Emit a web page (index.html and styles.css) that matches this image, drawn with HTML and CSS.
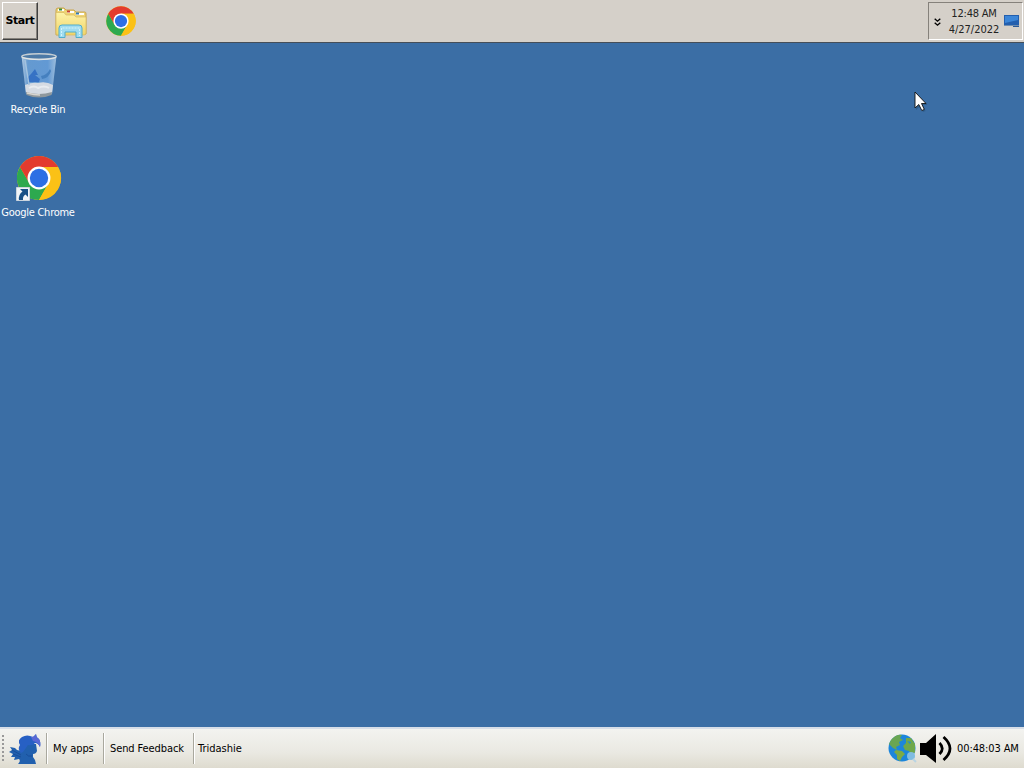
FILE: index.html
```
<!DOCTYPE html>
<html lang="en">

<head>
    <meta charset="UTF-8">
    <meta name="viewport" content="width=device-width, initial-scale=1.0">
    <title>Desktop</title>
    <link rel="stylesheet" href="styles.css">
</head>

<body>
    <svg width="0" height="0" class="defs">
        <symbol id="chrome" viewBox="0 0 48 48">
            <circle cx="24" cy="24" r="23.5" fill="#fbc116" />
            <path d="M3.7 12.2 L14 29.8 L24 35 L34 29.8 L24 47.5 A23.5 23.5 0 0 1 3.7 12.2 Z" fill="#2da94f" />
            <path d="M24 12.2 H44.3 A23.5 23.5 0 0 0 3.7 12.2 L14 29.8 L24 24 Z" fill="#e33b2e" />
            <path d="M24 12.2 H44.3 A23.5 23.5 0 0 1 24 47.5 L34 29.8 Z" fill="#fbc116" />
            <circle cx="24" cy="24" r="12.2" fill="#fff" />
            <circle cx="24" cy="24" r="9.8" fill="#2d6fe4" />
        </symbol>
    </svg>

    <div class="taskbar">
        <button class="start">Start</button>
        <svg class="folder" width="34" height="32" viewBox="0 0 34 32">
            <defs>
                <linearGradient id="yellow" x1="0" y1="0" x2="0" y2="1">
                    <stop offset="0" stop-color="#fdf3a9" />
                    <stop offset="1" stop-color="#f0d468" />
                </linearGradient>
            </defs>
            <path d="M2 28 V3 Q2 1 4 1 H10 L12 3 H20 L22 5 H31 Q32 5 32 7 V27 Z" fill="#eed477" stroke="#c8a650" />
            <path d="M4 3 H10 M13 5 H20 M22 7 H30" stroke="#fff" stroke-width="2" />
            <path d="M5 2.5 H8" stroke="#398b3c" stroke-width="2" />
            <path d="M13 4.5 H16" stroke="#c84431" stroke-width="2" />
            <path d="M22 6.5 H25" stroke="#317ab5" stroke-width="2" />
            <path d="M2 5.5 H10 L12 8 H20 L22 10 H32 V26 Q32 28 30 28 H4 Q2 28 2 26 Z" fill="url(#yellow)" stroke="#d7b95e" stroke-width=".7" />
            <path d="M5 30.5 V21 Q5 18 8 18 H25 Q28 18 28 21 V30.5 H22 V25 H11 V30.5 Z" fill="#9fdcf0" stroke="#50adcd" />
            <path d="M7.5 29 V21 H25.5 V29" fill="none" stroke="#d5f4fb" stroke-dasharray="2 1" />
        </svg>
        <svg class="quick-chrome" width="30" height="30"><use href="#chrome" /></svg>
        <div class="tray">
            <svg class="chevrons" width="7" height="9" viewBox="0 0 7 9" fill="none" stroke="#000" stroke-width="1.4">
                <path d="M.7 .8 L3.5 3.2 L6.3 .8 M.7 4.8 L3.5 7.2 L6.3 4.8" />
            </svg>
            <div class="clock">
                <span class="time">12:48 AM</span>
                <span class="date">4/27/2022</span>
            </div>
            <svg class="monitor" width="16" height="13" viewBox="0 0 16 13">
                <path d="M0 0 H15 V10 H0 Z" fill="#235fae" />
                <path d="M1 1 H14 V5 L1 8 Z" fill="#3c86d8" />
                <path d="M0 10.5 H15" stroke="#718eb0" />
                <path d="M9 11 H15 V12 H9 Z" fill="#295a98" />
            </svg>
        </div>
    </div>

    <div class="desktop">
        <div class="shortcut">
            <svg width="48" height="48" viewBox="0 0 48 48">
                <defs>
                    <linearGradient id="glass">
                        <stop offset="0" stop-color="#b4cbe2" />
                        <stop offset=".18" stop-color="#659ad0" />
                        <stop offset=".75" stop-color="#6299d4" />
                        <stop offset="1" stop-color="#9dbddc" />
                    </linearGradient>
                </defs>
                <path d="M6.5 5 L11 43 Q24 48 37 43 L41.5 5 Z" fill="url(#glass)" />
                <path d="M10 34 Q17 31 23 32 Q31 30 38 34 L37 42 Q24 46 11 42 Z" fill="#d5dbe3" />
                <path d="M14 37 Q19 34 23 37 Q29 34 34 37" fill="none" stroke="#e8ecf0" stroke-width="2" />
                <path d="M11 41 Q24 45 37 41 L36.5 44 Q24 49 11.5 44 Z" fill="#8f989d" />
                <path d="M12 42 Q19 44 25 44" fill="none" stroke="#d8d5cf" stroke-width="1.5" />
                <path d="M16 23 L20 18 L23 24 L20 24 L25 28 L24 31 H14 L12 27 Z" fill="#3672c4" />
                <path d="M26 25 Q32 24 35 18 L36 20 Q34 27 27 28 Z" fill="#4580bf" />
                <path d="M10 9 L14 34" stroke="#a4c3df" stroke-width="1.5" />
                <ellipse cx="24" cy="5.5" rx="17.2" ry="2.8" fill="#4c79a6" stroke="#c4cdd3" stroke-width="1.5" />
                <path d="M7 6.5 Q24 11 41 6.5" fill="none" stroke="#e1e5e7" stroke-width="1.2" />
            </svg>
            <span class="label recycle">Recycle Bin</span>
        </div>
        <div class="shortcut">
            <svg width="48" height="48" viewBox="0 0 48 48">
                <use href="#chrome" x="1.5" y="1.5" width="45" height="45" />
                <path d="M1.5 33.5 H14.5 V46.5 H1.5 Z" fill="#f0f4f8" stroke="#ccd5de" />
                <path d="M5 35 H13 V43 L10.5 40.500 Q7.500 42 8 46 H4 Q3 41 7.500 37.500 Z" fill="#175087" />
            </svg>
            <span class="label google">Google Chrome</span>
        </div>
    </div>

    <div class="appbar">
        <div class="grip"></div>
        <svg class="pony" width="34" height="32" viewBox="0 0 34 32">
            <path d="M10 31 Q13 28 11 26 L6 27 L7 24 L3 24 L5 21 L1 19 L4 17 L2 14 L7 15 L9 17 L13 18 L17 11 H28 L29 18 Q28 21 25 21 V24 L27 27 L28 31 Z" fill="#2160ae" />
            <path d="M13 20 Q9 16 12 12 Q9 7 14 4 Q19 1 25 4 L28 1 Q28 4 31 6 Q33 9 32 14 Q30 10 27 10 Q25 13 20 12 L15 19 Z" fill="#2760c4" />
            <path d="M23 4 Q27 4 28 1 Q28 5 31 6 Q33 9 32 14 Q30 9 25 8 Z" fill="#5b69d5" />
            <path d="M4 17 L13 22 M5 21 L13 24 M18 21 Q20 24 24 23" stroke="#174a96" stroke-width=".8" fill="none" />
        </svg>
        <div class="item apps">My apps</div>
        <div class="item feedback">Send Feedback</div>
        <div class="item user">Tridashie</div>
        <div class="status">
            <svg class="globe" width="29" height="29" viewBox="0 0 29 29">
                <circle cx="14" cy="14" r="13.5" fill="#1c86db" />
                <path d="M3 6 Q8 0 14 1 L12 4 L15 6 L11 8 L12 11 L8 13 L9 16 L5 14 L1 10 Z" fill="#69a653" />
                <path d="M8 16 L14 17 L17 20 L14 23 L12 27 L9 25 L9 21 L6 18 Z" fill="#7cab45" />
                <path d="M18 4 L23 4 L27 10 L27 18 L24 22 L21 17 L17 16 L15 12 L18 9 Z" fill="#6fa84b" />
                <path d="M19 7 L23 8 L22 10 Z" fill="#238bd1" />
                <circle cx="23" cy="22" r="4" fill="#80bce1" />
                <path d="M25 25 L28 28" stroke="#b9d4e3" stroke-width="2" />
            </svg>
            <svg class="speaker" width="34" height="30" viewBox="0 0 34 30">
                <path d="M1 9 H7 L17 0 V29 L7 21 H1 Z" fill="#000" />
                <path d="M20.5 9 Q26 14.5 20.5 20 M24.5 3 Q37.5 14.5 24.5 26" fill="none" stroke="#000" stroke-width="2.8" />
            </svg>
            <span class="seconds">00:48:03 AM</span>
        </div>
    </div>

    <svg class="cursor" width="14" height="22" viewBox="0 0 14 22">
        <path d="M2 3 V19 L6 15.5 L9 21 L11.5 20 L9 14 H13.5 Z" fill="#244b72" opacity=".5" />
        <path d="M1 1 V17 L4.8 13.5 L7.8 19.5 L10.3 18.4 L7.5 12.5 H12 Z" fill="#fff" stroke="#111" stroke-width=".9" />
    </svg>
</body>

</html>
```
FILE: styles.css
```
* {
    margin: 0;
    padding: 0;
    box-sizing: border-box;
}

body {
    display: flex;
    flex-direction: column;
    width: 100vw;
    height: 100vh;
    overflow: hidden;
    background-color: #3b6ea5;
    font-family: "DejaVu Sans Condensed", "DejaVu Sans", sans-serif;
    font-stretch: condensed;
    font-size: 11px;
    line-height: 16px;
    color: #222;
}

svg {
    display: block;
    flex-shrink: 0;
}

.defs {
    position: absolute;
}

.taskbar {
    display: flex;
    align-items: center;
    height: 43px;
    padding: 0 1px 1px 2px;
    background-color: #d5d0c9;
    border-bottom: 1px solid #454e58;
}

.start {
    width: 36px;
    height: 38px;
    padding-top: 1px;
    background-color: #d5d0c9;
    border: 1px solid;
    border-color: #fff #404040 #404040 #fff;
    box-shadow: inset -1px -1px #85817b;
    font: inherit;
    font-family: "DejaVu Sans", sans-serif;
    font-stretch: normal;
    font-size: 11px;
    font-weight: bold;
    letter-spacing: -0.5px;
    color: #000;
}

.folder {
    margin: 4px 0 0 16px;
}

.quick-chrome {
    margin-left: 18px;
    margin-top: 1px;
}

.tray {
    display: flex;
    align-items: center;
    width: 95px;
    height: 38px;
    margin-left: auto;
    padding-left: 5px;
    border: 1px solid;
    border-color: #85817b #fff #fff #85817b;
}

.chevrons {
    margin-top: 3px;
}

.clock {
    display: flex;
    flex-direction: column;
    align-items: center;
    width: 50px;
    margin-left: 8px;
    padding-top: 2px;
    white-space: nowrap;
}

.time {
    letter-spacing: -0.2px;
}

.monitor {
    margin-left: 5px;
    margin-top: 2px;
}

.desktop {
    display: flex;
    flex: 1;
    flex-direction: column;
    gap: 36px;
    padding-top: 8px;
}

.shortcut {
    display: flex;
    flex-direction: column;
    align-items: center;
    gap: 3px;
    width: 76px;
    color: #fff;
    white-space: nowrap;
}

.shortcut svg {
    margin-left: 2px;
}

.recycle {
    letter-spacing: -0.2px;
}

.google {
    letter-spacing: -0.27px;
}

.appbar {
    display: flex;
    align-items: center;
    height: 41px;
    padding-left: 2px;
    background: linear-gradient(#f3f3f0, #eae9e2 60%, #dedbcf);
    border-top: 2px solid #d7dee8;
    color: #000;
    white-space: nowrap;
}

.grip {
    width: 2px;
    height: 27px;
    background: repeating-linear-gradient(#999 0 2px, transparent 2px 4px);
}

.pony {
    margin-left: 4px;
}

.item {
    height: 31px;
    line-height: 31px;
    border-left: 1px solid #a9a89e;
    box-shadow: inset 1px 0 #fff;
}

.apps {
    width: 57px;
    margin-left: 4px;
    padding-left: 6px;
    letter-spacing: -0.1px;
}

.feedback {
    width: 90px;
    padding-left: 6px;
    letter-spacing: -0.1px;
}

.user {
    padding-left: 4px;
}

.status {
    display: flex;
    align-items: center;
    margin-left: auto;
    width: 136px;
}

.speaker {
    margin-left: 2px;
}

.seconds {
    margin-left: 4px;
    letter-spacing: -0.1px;
}

.cursor {
    position: absolute;
    left: 914px;
    top: 91px;
}
```
